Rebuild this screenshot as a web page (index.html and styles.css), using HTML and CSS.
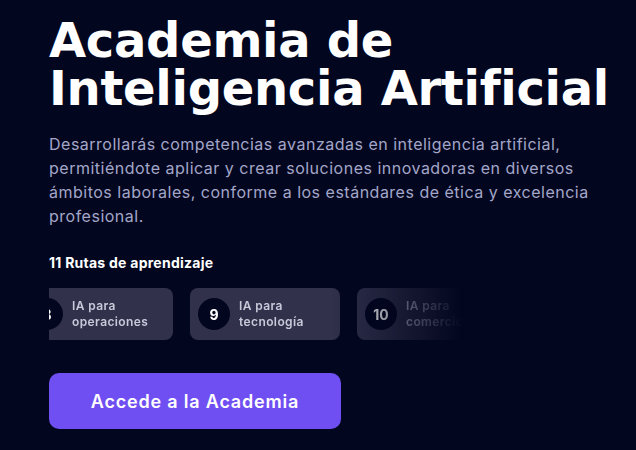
FILE: index.html
```html
<!DOCTYPE html>
<html lang="es">
<head>
<meta charset="utf-8">
<title>Academia de Inteligencia Artificial</title>
<link rel="stylesheet" href="styles.css">
</head>
<body>
<main class="hero">
  <h1 class="title">Academia de<br>Inteligencia Artificial</h1>
  <p class="lead">Desarrollarás competencias avanzadas en inteligencia artificial,<br>permitiéndote aplicar y crear soluciones innovadoras en diversos<br>ámbitos laborales, conforme a los estándares de ética y excelencia<br>profesional.</p>
  <h2 class="routes-label">11 Rutas de aprendizaje</h2>
  <div class="carousel">
    <div class="track">
      <div class="card"><span class="num">8</span><span class="card-text">IA para<br>operaciones</span></div>
      <div class="card"><span class="num">9</span><span class="card-text">IA para<br>tecnología</span></div>
      <div class="card"><span class="num">10</span><span class="card-text">IA para<br>comercio</span></div>
    </div>
  </div>
  <a class="cta" href="#">Accede a la Academia</a>
</main>
</body>
</html>
```

FILE: styles.css
```css
* { box-sizing: border-box; }
html, body {
  margin: 0;
  padding: 0;
  background: #03061f;
  width: 636px;
  height: 450px;
  overflow: hidden;
}
.hero {
  padding: 16px 0 0 49px;
  display: flex;
  flex-direction: column;
  align-items: flex-start;
  font-family: Inter, "Noto Sans", sans-serif;
}
.title {
  margin: 0;
  font-family: "DejaVu Sans", Inter, sans-serif;
  font-weight: 700;
  font-size: 48px;
  line-height: 48px;
  color: #ffffff;
  letter-spacing: -0.3px;
  white-space: nowrap;
}
.lead {
  margin: 20px 0 0;
  font-size: 16px;
  line-height: 24px;
  letter-spacing: 0.5px;
  color: #a4a7c9;
  white-space: nowrap;
}
.routes-label {
  margin: 25px 0 0;
  font-size: 14px;
  line-height: 20px;
  font-weight: 700;
  letter-spacing: 0.25px;
  color: #ffffff;
}
.carousel {
  margin-top: 15px;
  width: 414px;
  overflow: hidden;
  -webkit-mask-image: linear-gradient(to right, #000 68%, transparent 100%);
  mask-image: linear-gradient(to right, #000 68%, transparent 100%);
}
.track {
  display: flex;
  gap: 17px;
  margin-left: -26px;
}
.card {
  flex: 0 0 150px;
  height: 52px;
  border-radius: 8px;
  background: #31314c;
  display: flex;
  align-items: center;
  gap: 9px;
  padding: 0 8px;
}
.num {
  flex: 0 0 32px;
  width: 32px;
  height: 32px;
  border-radius: 50%;
  background: #03061f;
  color: #ffffff;
  font-weight: 700;
  font-size: 14px;
  display: flex;
  align-items: center;
  justify-content: center;
}
.card-text {
  font-size: 12px;
  line-height: 16px;
  font-weight: 600;
  letter-spacing: 0.4px;
  color: #c9c9da;
  white-space: nowrap;
}
.cta {
  margin-top: 33px;
  width: 292px;
  height: 56px;
  border-radius: 10px;
  background: #6f4ff2;
  color: #ffffff;
  text-decoration: none;
  font-size: 18px;
  font-weight: 600;
  letter-spacing: 0.8px;
  display: flex;
  align-items: center;
  justify-content: center;
}
```
